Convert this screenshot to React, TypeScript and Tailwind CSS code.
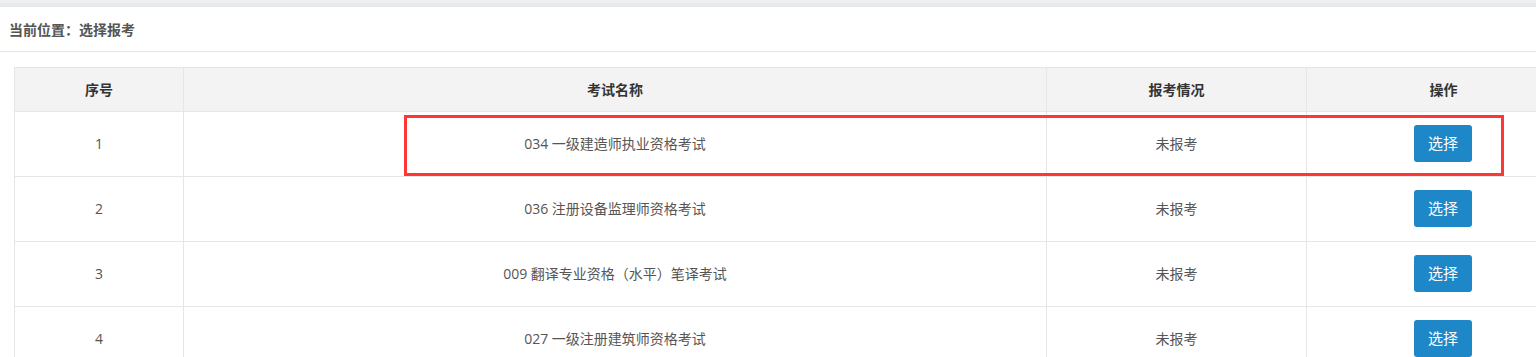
import React from 'react';

interface Exam {
  id: number;
  name: string;
  status: string;
}

const exams: Exam[] = [
  { id: 1, name: '034 一级建造师执业资格考试', status: '未报考' },
  { id: 2, name: '036 注册设备监理师资格考试', status: '未报考' },
  { id: 3, name: '009 翻译专业资格（水平）笔译考试', status: '未报考' },
  { id: 4, name: '027 一级注册建筑师资格考试', status: '未报考' },
];

const font = { fontFamily: '"Open Sans", "Noto Sans CJK SC", sans-serif' };

export default function App() {
  return (
    <div className="relative w-[1536px] h-[357px] overflow-hidden bg-white" style={font}>
      {/* Top band */}
      <div className="h-[3px] bg-[#f0f0f0]" />
      <div className="h-[4px] bg-[#e6eaee]" />

      {/* Breadcrumb */}
      <div className="h-[45px] border-b border-[#e6e6e6] flex items-center pl-[9px] text-[14px] font-semibold text-[#555]">
        当前位置：选择报考
      </div>

      {/* Table */}
      <div className="pt-[15px] pl-[14px]">
        <table className="w-[1566px] border-collapse table-fixed text-[14px]">
          <colgroup>
            <col className="w-[169px]" />
            <col className="w-[863px]" />
            <col className="w-[260px]" />
            <col className="w-[274px]" />
          </colgroup>
          <thead>
            <tr className="h-[44px] bg-[#f3f3f3]">
              <th className="border border-[#e6e6e6] font-bold text-[#333] text-center">序号</th>
              <th className="border border-[#e6e6e6] font-bold text-[#333] text-center">考试名称</th>
              <th className="border border-[#e6e6e6] font-bold text-[#333] text-center">报考情况</th>
              <th className="border border-[#e6e6e6] font-bold text-[#333] text-center">操作</th>
            </tr>
          </thead>
          <tbody>
            {exams.map((exam) => (
              <tr key={exam.id} className="h-[65px]">
                <td className="border border-[#e6e6e6] text-center text-[#555] pb-[2px]">{exam.id}</td>
                <td className="border border-[#e6e6e6] text-center text-[#555] pb-[2px]">{exam.name}</td>
                <td className="border border-[#e6e6e6] text-center text-[#555] pb-[2px]">{exam.status}</td>
                <td className="border border-[#e6e6e6] pb-[1px]">
                  <div className="pl-[107px]">
                    <button className="w-[58px] h-[37px] rounded-[3px] bg-[#1e87c8] text-white text-[15px]">
                      选择
                    </button>
                  </div>
                </td>
              </tr>
            ))}
          </tbody>
        </table>
      </div>

      {/* Highlight box over first row */}
      <div className="absolute left-[404px] top-[115px] w-[1100px] h-[61px] border-[3px] border-[#ff3636] pointer-events-none" />
    </div>
  );
}
